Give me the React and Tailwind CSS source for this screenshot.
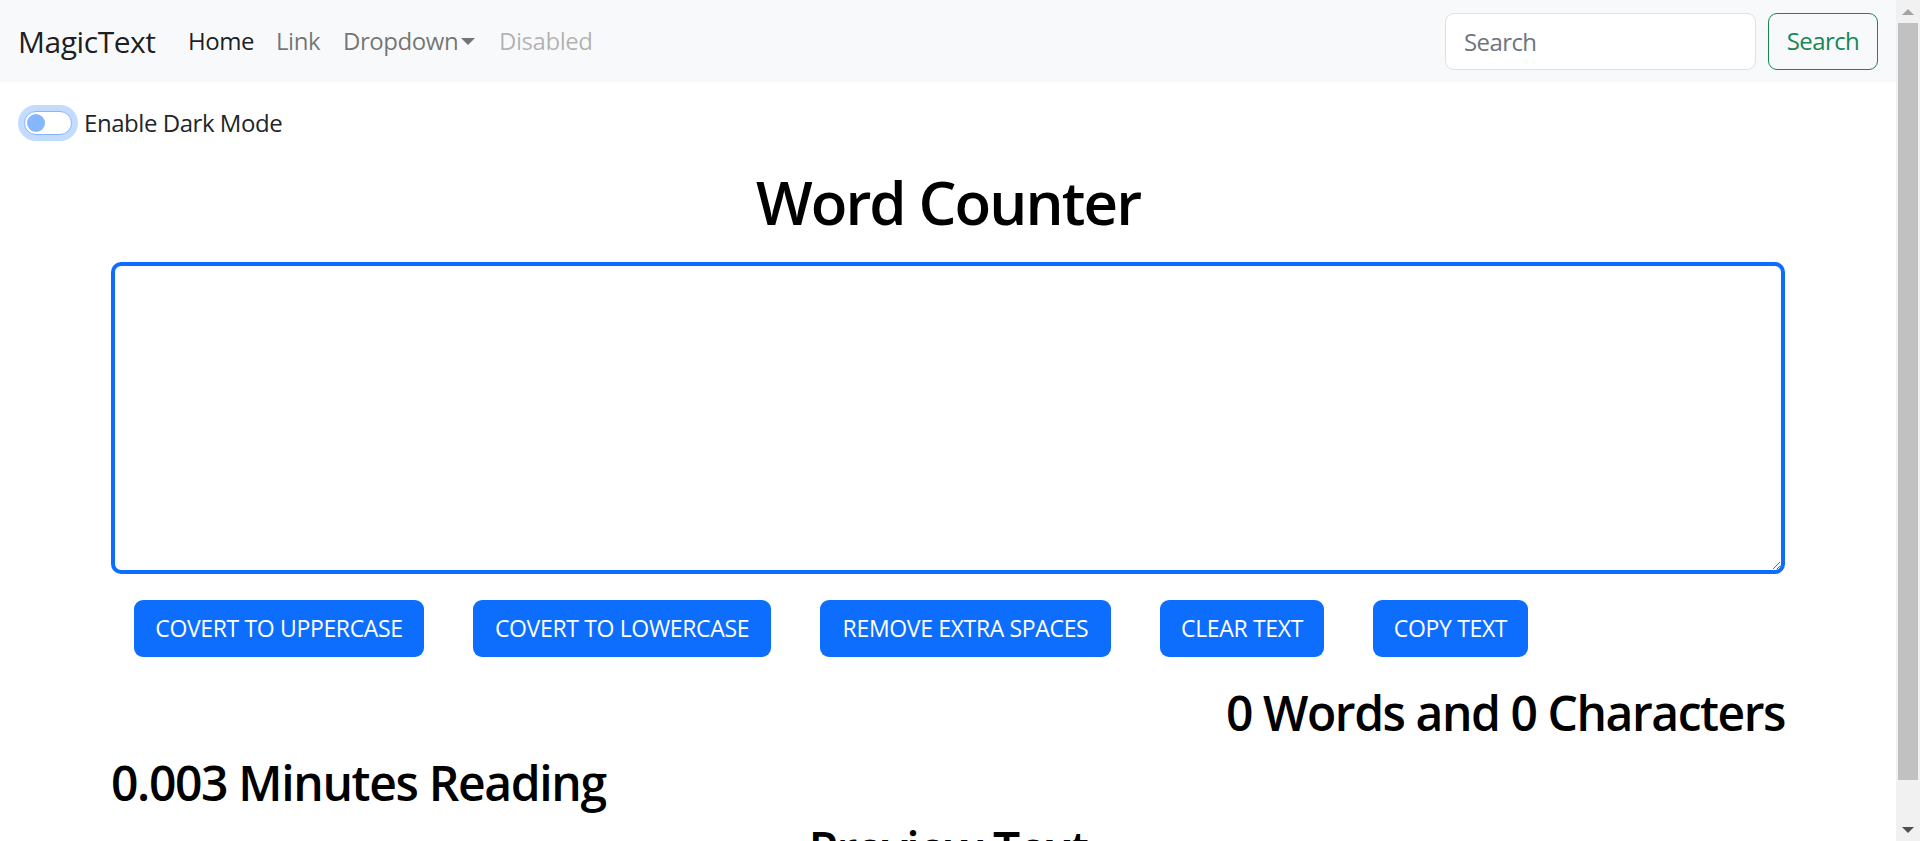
import React from "react";

const buttons = [
  ["COVERT TO UPPERCASE", "w-[290px]"],
  ["COVERT TO LOWERCASE", "w-[298px]"],
  ["REMOVE EXTRA SPACES", "w-[291px]"],
  ["CLEAR TEXT", "w-[164px]"],
  ["COPY TEXT", "w-[155px]"],
];

export default function App() {
  return (
    <div className="flex h-[841px] w-full overflow-hidden bg-white font-['Open_Sans',sans-serif] tracking-[-0.028em] text-[#212529]">
      <div className="min-w-0 flex-1">
        <nav className="flex h-[82px] items-center bg-[#f8f9fa] px-[18px]">
          <span className="mr-[24px] inline-block w-[134px] whitespace-nowrap text-[30px] leading-[45px] text-black/90">
            MagicText
          </span>
          <ul className="flex items-center text-[24px] leading-[36px]">
            <li className="px-[12px] py-[12px]">
              <span className="inline-block w-[64px] whitespace-nowrap text-black/90">Home</span>
            </li>
            <li className="px-[12px] py-[12px]">
              <span className="inline-block w-[43px] whitespace-nowrap text-black/55">Link</span>
            </li>
            <li className="flex items-center px-[12px] py-[12px] text-black/55">
              <span className="inline-block w-[112px] whitespace-nowrap">Dropdown</span>
              <span className="ml-[6px] inline-block h-0 w-0 border-x-[7px] border-t-[7px] border-x-transparent border-t-[#737475]"></span>
            </li>
            <li className="px-[12px] py-[12px]">
              <span className="inline-block w-[90px] whitespace-nowrap text-black/30">Disabled</span>
            </li>
          </ul>
          <form className="ml-auto flex items-center">
            <input
              placeholder="Search"
              className="h-[57px] w-[311px] rounded-[9px] border-[1.5px] border-[#dee2e6] bg-white px-[18px] text-[24px] tracking-[-0.025em] text-[#212529] outline-none placeholder:text-[#6c757d]"
            />
            <button
              type="button"
              className="ml-[12px] h-[57px] w-[110px] rounded-[9px] border-[1.5px] border-[#198754] text-[24px] tracking-[-0.025em] text-[#198754]"
            >
              Search
            </button>
          </form>
        </nav>

        <div className="ml-[24px] mt-[23px] flex h-[36px] items-center">
          <div className="flex h-[24px] w-[48px] items-center rounded-full border-[1.5px] border-[#86b7fe] bg-white shadow-[0_0_0_6px_rgba(13,110,253,0.25)]">
            <div className="ml-[1.5px] h-[18px] w-[18px] rounded-full bg-[#86b7fe]"></div>
          </div>
          <span className="ml-[12px] text-[24px] leading-[36px] text-[#212529]">Enable Dark Mode</span>
        </div>

        <div className="mx-auto w-[1710px] px-[18px]">
          <h1 className="mt-[25px] text-center text-[60px] font-semibold leading-[72px] tracking-[-0.032em] text-black">
            Word Counter
          </h1>
          <textarea className="mt-[24px] block h-[312px] w-full rounded-[10px] border-[4px] border-[#0d6efd] bg-white px-[18px] py-[9px] text-[24px] outline-none"></textarea>
          <div className="mt-[26px] flex gap-[49px] pl-[23px]">
            {buttons.map(([label, w]) => (
              <button
                key={label}
                type="button"
                className={`h-[57px] ${w} whitespace-nowrap rounded-[9px] bg-[#0d6efd] text-[23px] tracking-[-0.015em] text-white`}
              >
                {label}
              </button>
            ))}
          </div>
          <h2 className="mt-[27px] text-right text-[48px] font-semibold leading-[57.6px] tracking-[-0.03em] text-black">
            0 Words and 0 Characters
          </h2>
          <h2 className="mt-[12px] text-[48px] font-semibold leading-[57.6px] tracking-[-0.028em] text-black">
            0.003 Minutes Reading
          </h2>
          <h2 className="mt-[9px] text-center text-[48px] font-semibold leading-[57.6px] tracking-[-0.03em] text-black">
            Preview Text
          </h2>
        </div>
      </div>

      <div className="flex h-full w-[24px] shrink-0 flex-col bg-[#f1f1f1]">
        <div className="flex h-[23px] items-center justify-center">
          <span className="inline-block h-0 w-0 border-x-[6px] border-b-[6px] border-x-transparent border-b-[#a3a3a3]"></span>
        </div>
        <div className="mx-[2px] h-[757px] bg-[#c1c1c1]"></div>
        <div className="flex-1"></div>
        <div className="flex h-[23px] items-center justify-center">
          <span className="inline-block h-0 w-0 border-x-[6px] border-t-[6px] border-x-transparent border-t-[#505050]"></span>
        </div>
      </div>
    </div>
  );
}
